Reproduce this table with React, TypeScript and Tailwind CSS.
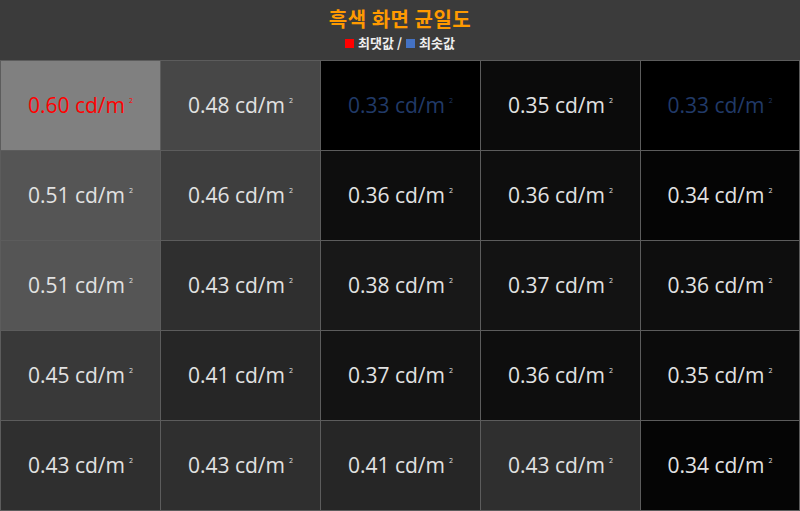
import React from "react";

type Cell = { v: string; bg: string; tone?: "max" | "min" };

const rows: Cell[][] = [
  [
    { v: "0.60", bg: "bg-[#808080]", tone: "max" },
    { v: "0.48", bg: "bg-[#474747]" },
    { v: "0.33", bg: "bg-[#000000]", tone: "min" },
    { v: "0.35", bg: "bg-[#0b0b0b]" },
    { v: "0.33", bg: "bg-[#000000]", tone: "min" },
  ],
  [
    { v: "0.51", bg: "bg-[#555555]" },
    { v: "0.46", bg: "bg-[#3e3e3e]" },
    { v: "0.36", bg: "bg-[#0e0e0e]" },
    { v: "0.36", bg: "bg-[#0e0e0e]" },
    { v: "0.34", bg: "bg-[#050505]" },
  ],
  [
    { v: "0.51", bg: "bg-[#555555]" },
    { v: "0.43", bg: "bg-[#2f2f2f]" },
    { v: "0.38", bg: "bg-[#181818]" },
    { v: "0.37", bg: "bg-[#131313]" },
    { v: "0.36", bg: "bg-[#0e0e0e]" },
  ],
  [
    { v: "0.45", bg: "bg-[#393939]" },
    { v: "0.41", bg: "bg-[#262626]" },
    { v: "0.37", bg: "bg-[#131313]" },
    { v: "0.36", bg: "bg-[#0e0e0e]" },
    { v: "0.35", bg: "bg-[#0b0b0b]" },
  ],
  [
    { v: "0.43", bg: "bg-[#2f2f2f]" },
    { v: "0.43", bg: "bg-[#2f2f2f]" },
    { v: "0.41", bg: "bg-[#262626]" },
    { v: "0.43", bg: "bg-[#2f2f2f]" },
    { v: "0.34", bg: "bg-[#050505]" },
  ],
];

export default function App() {
  return (
    <div className="w-[800px] h-[511px] bg-[#3b3b3b] flex flex-col" style={{ fontFamily: "'Open Sans', 'Noto Sans', 'Noto Sans CJK KR', sans-serif" }}>
      <div className="h-[60px] flex flex-col items-center pt-[6px]">
        <div className="text-[20px] leading-[26px] font-bold text-[#ff9a00] tracking-[0.5px]" style={{ fontFamily: "'Noto Sans CJK KR', sans-serif" }}>
          흑색 화면 균일도
        </div>
        <div className="flex items-center gap-[4px] text-[13px] leading-[16px] font-bold text-[#eeeeee] mt-[3px]" style={{ fontFamily: "'Noto Sans CJK KR', sans-serif" }}>
          <span className="w-[9px] h-[9px] bg-[#ff0000] inline-block" />
          <span>최댓값 /</span>
          <span className="w-[9px] h-[9px] bg-[#4472c4] inline-block" />
          <span>최솟값</span>
        </div>
      </div>
      <div className="flex-1 grid grid-cols-[159px_159px_159px_159px_158px] grid-rows-5 gap-px p-px bg-[#5c5c5c]">
        {rows.flat().map((c, i) => (
          <div key={i} className={`${c.bg} flex items-center justify-center`}>
            <span
              className={`text-[21px] leading-none font-normal ${
                c.tone === "max" ? "text-[#ff0000]" : c.tone === "min" ? "text-[#213a68]" : "text-[#e2e2e2]"
              }`}
            >
              {c.v} cd/m
              <span className="text-[7px] align-[10px] ml-[4px]">2</span>
            </span>
          </div>
        ))}
      </div>
    </div>
  );
}
